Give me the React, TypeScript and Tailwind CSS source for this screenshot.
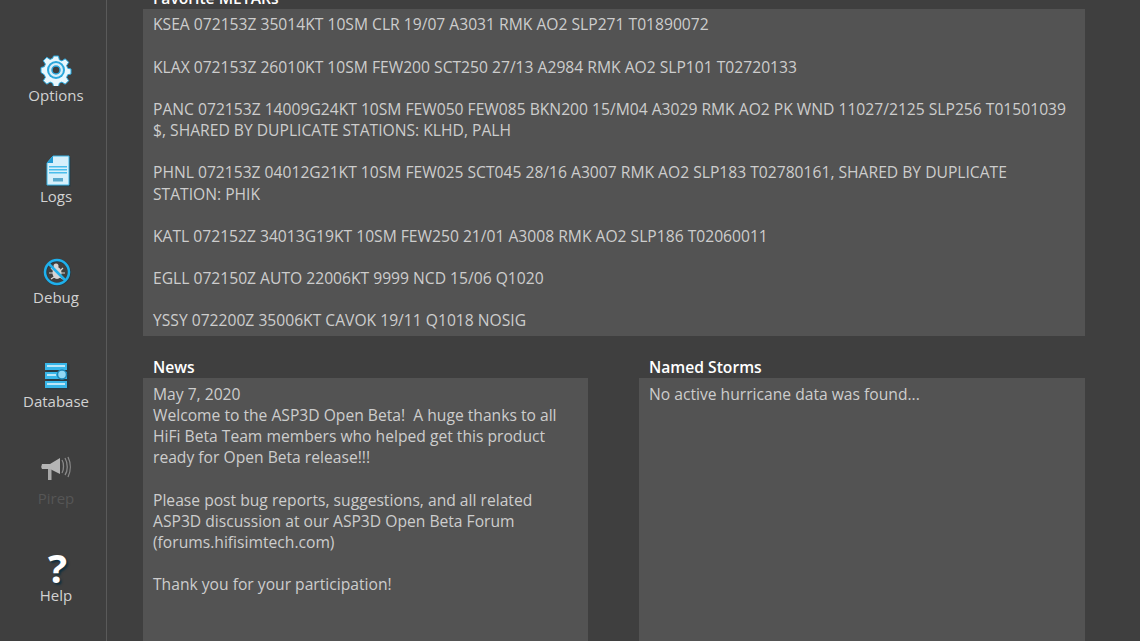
const font = { fontFamily: '"Open Sans", "Noto Sans", sans-serif' };

function Gear() {
  return (
    <svg width="32" height="32" viewBox="0 0 32 32" className="ml-[1px] -mt-[1px]">
      <path d="M13.500 2h5l.8 3.800 2.600 1.100 3.300-2.100 3.500 3.500-2.100 3.300 1.100 2.600 3.300.8v5l-3.300.8-1.100 2.600 2.100 3.300-3.500 3.500-3.300-2.100-2.600 1.100-.8 3.300h-5l-.8-3.300-2.600-1.100-3.300 2.100-3.500-3.500 2.100-3.300-1.100-2.600L1 18.500v-5l3.300-.8 1.100-2.600-2.100-3.300 3.500-3.500 3.300 2.100 2.600-1.100z" fill="#e8f7fd" stroke="#29a9e0" strokeWidth="1" />
      <circle cx="16" cy="16" r="9" fill="#2aa7dc" />
      <circle cx="16" cy="16" r="7" fill="#d7eef8" />
      <circle cx="16" cy="16" r="4" fill="#3f3f3f" stroke="#2aa7dc" strokeWidth="1.500" />
    </svg>
  );
}

function LogIcon() {
  return (
    <svg width="26" height="32" viewBox="0 0 26 32" className="ml-[3px]">
      <path d="M2 8 8 1h16v29H2z" fill="#16384a" opacity=".6" transform="translate(1.500 1.500)" />
      <path d="M2 8 8 1h16v29H2z" fill="#d6f0fb" stroke="#38b4e6" strokeWidth="1" />
      <path d="M2 8 8 1v7z" fill="#1f9ad3" />
      <path d="M4 11h18v1.500H4zM4 14h18v1.500H4zM4 17h18v1.500H4z" fill="#49bdec" />
      <rect x="4" y="21" width="18" height="7" fill="#d6f0fb" />
      <rect x="8" y="23" width="10" height="3.500" fill="#5aa9cc" />
    </svg>
  );
}

function DebugIcon() {
  return (
    <svg width="30" height="30" viewBox="0 0 30 30" className="ml-[2px] -mt-[1px]">
      <circle cx="15.500" cy="15.500" r="12" fill="none" stroke="#16384a" strokeWidth="3" opacity=".6" />
      <ellipse cx="15" cy="16" rx="4.500" ry="6" fill="#d5d5d5" />
      <circle cx="14" cy="9" r="2.500" fill="#d5d5d5" />
      <path d="M9 11l3 3M7 16h4M9 22l3-2M21 11l-3 3M23 16h-4M21 22l-3-2" stroke="#d5d5d5" strokeWidth="1.200" />
      <circle cx="15" cy="15" r="12" fill="none" stroke="#1fb0ec" strokeWidth="2.500" />
      <path d="M6.500 6.500l17 17" stroke="#1fb0ec" strokeWidth="2.500" />
    </svg>
  );
}

function DbIcon() {
  return (
    <svg width="26" height="28" viewBox="0 0 26 28" className="ml-[3px] -mt-[1px]">
      <rect x="2.500" y="2.500" width="23" height="25" fill="#16384a" opacity=".5" />
      <rect x="1" y="1" width="22" height="7" fill="#38b7ea" />
      <rect x="1" y="10" width="22" height="7" fill="#38b7ea" />
      <rect x="1" y="19" width="22" height="7" fill="#38b7ea" />
      <path d="M3 4h18M3 13h9M3 22h18" stroke="#e6f7fe" strokeWidth="1.500" />
      <circle cx="18" cy="12.500" r="4.500" fill="#8fd8f5" stroke="#1b87b8" strokeWidth="1.500" />
    </svg>
  );
}

function HornIcon() {
  return (
    <svg width="32" height="26" viewBox="0 0 32 26" className="-mt-[9px] ml-[1px]">
      <path d="M2 8q-1.500 3 0 5h8l10 5V2L10 8z" fill="#b5b5b5" />
      <rect x="8" y="13" width="3.500" height="11" fill="#a8a8a8" />
      <path d="M22 4c2 3 2 10 0 13M25 2c3 5 3 13 0 17M28 1c3 6 3 14 0 20" fill="none" stroke="#8a8a8a" strokeWidth="1.300" />
    </svg>
  );
}

function NavItem({ icon, label, dim, className, labelClass }: { icon: React.ReactNode; label: string; dim?: boolean; className: string; labelClass: string }) {
  return (
    <div className={`flex flex-col items-center ${className}`}>
      <div className="flex h-[32px] items-center justify-center">{icon}</div>
      <span className={`text-[15px] leading-[20px] ${labelClass} ${dim ? "text-[#565656]" : "text-[#d2d2d2]"}`}>{label}</span>
    </div>
  );
}

const metars = [
  "KSEA 072153Z 35014KT 10SM CLR 19/07 A3031 RMK AO2 SLP271 T01890072",
  "KLAX 072153Z 26010KT 10SM FEW200 SCT250 27/13 A2984 RMK AO2 SLP101 T02720133",
  "PANC 072153Z 14009G24KT 10SM FEW050 FEW085 BKN200 15/M04 A3029 RMK AO2 PK WND 11027/2125 SLP256 T01501039 $, SHARED BY DUPLICATE STATIONS: KLHD, PALH",
  "PHNL 072153Z 04012G21KT 10SM FEW025 SCT045 28/16 A3007 RMK AO2 SLP183 T02780161, SHARED BY DUPLICATE STATION: PHIK",
  "KATL 072152Z 34013G19KT 10SM FEW250 21/01 A3008 RMK AO2 SLP186 T02060011",
  "EGLL 072150Z AUTO 22006KT 9999 NCD 15/06 Q1020",
  "YSSY 072200Z 35006KT CAVOK 19/11 Q1018 NOSIG",
];

export default function App() {
  return (
    <div style={font} className="flex h-[641px] w-[1140px] overflow-hidden bg-[#3f3f3f] text-[15.65px] leading-[21.15px] text-[#cdcdcd]">
      <aside className="flex h-full w-[107px] shrink-0 flex-col items-center border-r border-[#5a5a5a] pl-[6px] pt-[54px]">
        <NavItem className="h-[101px]" labelClass="-mt-[1px]" icon={<Gear />} label="Options" />
        <NavItem className="h-[101px]" labelClass="-mt-[1px]" icon={<LogIcon />} label="Logs" />
        <NavItem className="h-[104px]" labelClass="-mt-[1px]" icon={<DebugIcon />} label="Debug" />
        <NavItem className="h-[97px]" labelClass="-mt-[1px]" icon={<DbIcon />} label="Database" />
        <NavItem className="h-[98px]" labelClass="-mt-[1px]" icon={<HornIcon />} label="Pirep" dim />
        <NavItem className="h-[50px]" labelClass="mt-[1px]" icon={<span className="ml-[3px] -mt-[4px] text-[40px] font-bold leading-[32px] text-white [text-shadow:2px_2px_2px_#12303f]">?</span>} label="Help" />
      </aside>
      <main className="flex min-w-0 flex-1 flex-col pl-[36px] pr-[55px]">
        <div className="flex h-[9px] items-end overflow-hidden pl-[10px]">
          <span className="relative top-0 shrink-0 font-semibold text-white">Favorite METARs</span>
        </div>
        <section className="flex h-[327px] shrink-0 flex-col gap-[21.15px] overflow-hidden bg-[#535353] px-[10px] pt-[5.4px]">
          {metars.map((m) => (
            <p key={m}>{m}</p>
          ))}
        </section>
        <div className="mt-[20px] grid min-h-0 flex-1 grid-cols-[445px_446px] justify-between">
          <div className="flex min-h-0 flex-col">
            <h2 className="h-[22px] pl-[10px] pt-[1px] font-semibold text-white">News</h2>
            <div className="flex-1 bg-[#535353] px-[10px] pt-[6px]">
              <p>May 7, 2020</p>
              <p>Welcome to the ASP3D Open Beta!&nbsp; A huge thanks to all</p>
              <p>HiFi Beta Team members who helped get this product</p>
              <p>ready for Open Beta release!!!</p>
              <p className="mt-[21.15px]">Please post bug reports, suggestions, and all related</p>
              <p>ASP3D discussion at our ASP3D Open Beta Forum</p>
              <p>(forums.hifisimtech.com)</p>
              <p className="mt-[21.15px]">Thank you for your participation!</p>
            </div>
          </div>
          <div className="flex min-h-0 flex-col">
            <h2 className="h-[22px] pl-[10px] pt-[1px] font-semibold text-white">Named Storms</h2>
            <div className="flex-1 bg-[#535353] px-[10px] pt-[6px]">
              <p>No active hurricane data was found...</p>
            </div>
          </div>
        </div>
      </main>
    </div>
  );
}
